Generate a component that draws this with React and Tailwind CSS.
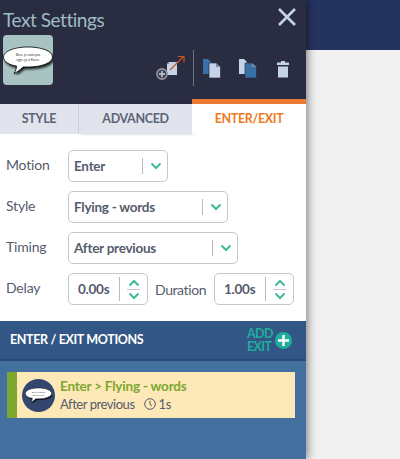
const lato = { fontFamily: "Lato, sans-serif" };

function Chevron({ up = false, size = 12 }) {
  return (
    <svg width={size} height={Math.round(size * 0.7)} viewBox="0 0 12 8" fill="none">
      <path d={up ? "M1.5 6.5 L6 2 L10.5 6.5" : "M1.5 1.5 L6 6 L10.5 1.5"} stroke="#3fb99c" strokeWidth="2" />
    </svg>
  );
}

function Select({ width, text }) {
  return (
    <div className={`${width} h-[32px] flex items-center rounded-[5px] border border-[#c5c6d0] bg-white`}>
      <span className="flex-1 pl-[5px] text-[13.500px] tracking-[-0.25px] font-bold text-[#565b6d] whitespace-nowrap">{text}</span>
      <span className="w-px h-[16px] bg-[#b9bbc4] -mt-[1px]" />
      <span className="w-[23px] ml-[1px] flex justify-center -mt-[1px]"><Chevron /></span>
    </div>
  );
}

function Stepper({ text }) {
  return (
    <div className="w-[80px] h-[32px] flex items-center rounded-[5px] border border-[#c5c6d0] bg-white">
      <span className="flex-1 pl-[9px] text-[13.500px] tracking-[-0.25px] font-bold text-[#565b6d]">{text}</span>
      <span className="w-px h-[24px] bg-[#b9bbc4]" />
      <span className="w-[27px] flex flex-col items-center gap-[2px]">
        <Chevron up />
        <span className="w-[13px] h-px bg-[#c5c6d0]" />
        <Chevron />
      </span>
    </div>
  );
}

function Row({ label, children, mb = "mb-[9px]" }) {
  return (
    <div className={`flex items-center ${mb}`}>
      <span className="w-[62px] text-[14px] tracking-[-0.2px] text-[#565b6d] -mt-[3px]">{label}</span>
      {children}
    </div>
  );
}

function Bubble({ w, h, small }) {
  return (
    <svg width={w} height={h} viewBox="0 0 50 30">
      <defs>
        <filter id={small ? "bs" : "bb"} x="-20%" y="-20%" width="140%" height="150%">
          <feDropShadow dx="1.5" dy="2" stdDeviation="1.2" floodColor="#000" floodOpacity="0.8" />
        </filter>
      </defs>
      <g filter={`url(#${small ? "bs" : "bb"})`}>
        <path d="M25 2 C38 2 49.500 6 49.500 12 C49.500 18 38 22 25 22 L20 22 C17 25 14 27 11 28.500 C12.500 26 13.500 23.500 13.500 21 C6 20 0.500 16.500 0.500 12 C0.500 6 12 2 25 2 Z" fill="#fff" stroke="#000" strokeWidth="0.8" />
      </g>
      <text x="25" y="10.500" textAnchor="middle" fontSize="3.400" fill="#333" fontFamily="Lato, sans-serif">Bien, je crois pas</text>
      <text x="25" y="16" textAnchor="middle" fontSize="3.400" fill="#333" fontFamily="Lato, sans-serif">ogre ça à Kiern.</text>
    </svg>
  );
}

function AddImageIcon() {
  return (
    <svg width="30" height="30" viewBox="0 0 30 30" fill="none">
      <path d="M13 6 H21 V19 H11 V8 Z" fill="#c5d3e8" />
      <path d="M11 8 L13 6 V8 Z" fill="#7f8ba5" />
      <path d="M14 14 L27.500 0.500" stroke="#c2591f" strokeWidth="1.200" />
      <path d="M22 0.500 H28 V6.500" stroke="#c2591f" strokeWidth="1.200" />
      <circle cx="6" cy="18" r="5" fill="#3a3c50" stroke="#8e929c" strokeWidth="1.800" />
      <path d="M3 18 H9 M6 15 V21" stroke="#b0b4bc" strokeWidth="2" />
    </svg>
  );
}

function CopyIcon({ front, back }) {
  return (
    <svg width="18" height="20" viewBox="0 0 18 20">
      <path d="M0 0 H5 L8 3 V15 H0 Z" fill={back} />
      <path d="M6 4 H13 L17.500 8 V19 H6 Z" fill={front} stroke="#2a2c42" strokeWidth="0.700" />
      <path d="M13 4 L17.500 8 H13 Z" fill="#7f8ba5" />
    </svg>
  );
}

function TrashIcon() {
  return (
    <svg width="12" height="17" viewBox="0 0 12 17" fill="#c5d3e8">
      <path d="M4 0 H8 V1.500 H12 V4 H0 V1.500 H4 Z" />
      <rect x="1" y="5.500" width="10" height="11" />
    </svg>
  );
}

function ClockIcon() {
  return (
    <svg width="12" height="12" viewBox="0 0 12 12" fill="none" stroke="#565b6d" strokeWidth="1">
      <circle cx="6" cy="6" r="5.300" />
      <path d="M6 2.800 V6.300 L8 8" />
    </svg>
  );
}

export default function App() {
  return (
    <div className="flex w-[400px] h-[459px] overflow-hidden bg-[#f0f0f0]" style={lato}>
      <div className="w-[306px] h-full flex flex-col shrink-0 bg-white shadow-[2px_0_8px_rgba(0,0,0,0.45)] relative z-10">
        {/* Header */}
        <div className="h-[104px] bg-[#2a2c42] relative shrink-0">
          <div className="pl-[3px] pt-[8px] text-[19px] tracking-[-0.45px] leading-[23px] text-[#9dbcc1]">Text Settings</div>
          <div className="ml-[3px] mt-[4px] w-[50px] h-[50px] rounded-[4px] bg-[#a9c3c3] flex items-center justify-center overflow-hidden">
            <Bubble w={50} h={30} />
          </div>
          <div className="absolute right-[17px] top-[50px] flex items-center">
            <div className="mt-[6px] mr-[7px]"><AddImageIcon /></div>
            <span className="w-px h-[36px] bg-[#6f7280] mr-[9px]" />
            <div className="mt-[2px] mr-[18px]"><CopyIcon back="#3771a5" front="#c5d3e8" /></div>
            <div className="mt-[2px] mr-[20px]"><CopyIcon back="#c5d3e8" front="#3771a5" /></div>
            <div className="mt-[2px]"><TrashIcon /></div>
          </div>
          <svg className="absolute left-[278px] top-[8px]" width="18" height="18" viewBox="0 0 18 18" stroke="#c5d3e8" strokeWidth="2.600">
            <path d="M1 1 L17 17 M17 1 L1 17" />
          </svg>
        </div>
        {/* Tabs */}
        <div className="h-[30px] flex shrink-0 bg-[#e1e4ec] relative z-10 items-stretch">
          <div className="w-[79px] flex items-center justify-center border-r border-[#cfd2d9] text-[12.500px] tracking-[-0.35px] font-bold text-[#5b6478]">STYLE</div>
          <div className="w-[113px] flex items-center justify-center text-[12.500px] tracking-[-0.35px] font-bold text-[#5b6478] shadow-[2px_0_3px_rgba(0,0,0,0.2)]">ADVANCED</div>
          <div className="w-[114px] h-[35px] -mt-[5px] border-t-[5px] border-[#e87a35] bg-white flex items-center justify-center text-[12.500px] tracking-[-0.35px] font-bold text-[#ee7a24]">ENTER/EXIT</div>
        </div>
        {/* Form */}
        <div className="pl-[6px] pt-[16px] h-[187px] shrink-0">
          <Row label="Motion"><Select width="w-[100px]" text="Enter" /></Row>
          <Row label="Style"><Select width="w-[160px]" text="Flying - words" /></Row>
          <Row label="Timing"><Select width="w-[170px]" text="After previous" /></Row>
          <Row label="Delay" mb="mb-0">
            <Stepper text="0.00s" />
            <span className="w-[66px] pl-[7px] text-[14px] tracking-[-0.4px] text-[#565b6d]">Duration</span>
            <Stepper text="1.00s" />
          </Row>
        </div>
        {/* Motions header */}
        <div className="h-[40px] shrink-0 bg-[#325786] border-b-2 border-[#2b4a72] flex items-center pl-[10px] pr-[14px]">
          <span className="flex-1 mt-[1px] text-[12.500px] tracking-[-0.35px] font-bold text-white">ENTER / EXIT MOTIONS</span>
          <span className="text-[12.500px] tracking-[-0.6px] leading-[13px] font-bold text-[#1fae9b] mr-[6px] w-[22px]">ADD EXIT</span>
          <span className="mt-[1px] w-[17px] h-[17px] rounded-full bg-[#1fae9b] flex items-center justify-center">
            <svg width="11" height="11" viewBox="0 0 11 11" stroke="#fff" strokeWidth="2.400"><path d="M0 5.500 H11 M5.500 0 V11" /></svg>
          </span>
        </div>
        {/* Motions list */}
        <div className="flex-1 bg-[#44709f] pt-[11px] pl-[7px]">
          <div className="w-[288px] h-[46px] flex items-center bg-[#fde8b8] border-l-[10px] border-[#7da72f]">
            <div className="ml-[5px] w-[33px] h-[33px] rounded-full bg-[#33466f] flex items-center justify-center overflow-hidden shrink-0">
              <Bubble w={27} h={16} small />
            </div>
            <div className="ml-[5px]">
              <div className="text-[13.500px] tracking-[-0.2px] leading-[17px] font-bold text-[#7da72f]">Enter &gt; Flying - words</div>
              <div className="mt-[1px] flex items-center text-[13px] tracking-[-0.45px] leading-[17px] text-[#565b6d]">
                <span>After previous</span>
                <span className="ml-[9px] mr-[3px]"><ClockIcon /></span>
                <span>1s</span>
              </div>
            </div>
          </div>
        </div>
      </div>
      <div className="flex-1 flex flex-col">
        <div className="h-[50px] bg-[#25335f]" />
      </div>
    </div>
  );
}
